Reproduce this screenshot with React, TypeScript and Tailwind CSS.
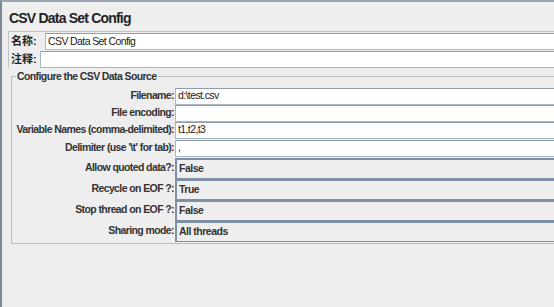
import React from "react";

const font = { fontFamily: '"Liberation Sans", Arial, "Noto Sans CJK SC", sans-serif' };

function TextRow({ label, value }: { label: string; value: string }) {
  return (
    <>
      <div className="flex h-[17px] items-center justify-end whitespace-nowrap pr-[1px] text-[10.5px] font-bold tracking-[-0.6px] text-[#333]">{label}</div>
      <div className="flex h-[17px] items-center whitespace-nowrap border border-[#a9b7c6] border-t-[#8e9cab] bg-white pl-[2px] text-[10.5px] tracking-[-0.6px] text-[#222]">
        {value}
      </div>
    </>
  );
}

function ComboRow({ label, value }: { label: string; value: string }) {
  return (
    <>
      <div className="flex h-[21px] items-center justify-end whitespace-nowrap pr-[1px] text-[10.5px] font-bold tracking-[-0.6px] text-[#333]">{label}</div>
      <div className="flex h-[21px] items-center whitespace-nowrap border border-[#7f90a4] border-l-[2px] border-t-[2px] bg-[#eeeeee] pl-[2px] text-[10.5px] font-bold tracking-[-0.5px] text-[#333]">
        {value}
      </div>
    </>
  );
}

export default function App() {
  return (
    <div
      style={font}
      className="relative h-[307px] w-[554px] overflow-hidden border-l-[2px] border-t-[2px] border-l-[#7d8997] border-t-[#9aa6b2] bg-[#eeeeee]"
    >
      <div className="w-[640px]">
        <div className="pl-[7px] pt-[7px] text-[14px] font-bold leading-[18px] tracking-[-0.8px] text-[#222]">
          CSV Data Set Config
        </div>
        <div className="ml-[6px] mt-[4px] border-l border-t border-[#c4c4c4]">
          <div className="flex h-[19px] items-center">
            <div className="w-[36px] pl-[2px] text-[11px] font-bold text-[#222]">名称:</div>
            <div className="flex h-[17px] flex-1 items-center border border-[#a9b7c6] border-t-[#8e9cab] bg-white pl-[2px] text-[10.5px] tracking-[-0.6px] text-[#222]">
              CSV Data Set Config
            </div>
          </div>
          <div className="flex h-[17px] items-center">
            <div className="w-[31px] pl-[2px] text-[11px] font-bold text-[#222]">注释:</div>
            <div className="h-[17px] flex-1 border border-[#a9b7c6] border-t-[#8e9cab] bg-white"></div>
          </div>
        </div>
        <fieldset className="ml-[9px] mt-[1px] border border-[#bdbdbd] px-[1px] pb-[1px] pt-0">
          <legend className="ml-[3px] px-[1px] text-[10.5px] font-bold tracking-[-0.6px] text-[#333]">Configure the CSV Data Source</legend>
          <div className="grid grid-cols-[162px_1fr] pt-[3px]">
            <TextRow label="Filename:" value="d:\test.csv" />
            <TextRow label="File encoding:" value="" />
            <TextRow label="Variable Names (comma-delimited):" value="t1,t2,t3" />
            <div className="col-span-2 h-[1px]"></div>
            <TextRow label="Delimiter (use '\t' for tab):" value="," />
            <div className="col-span-2 h-[1px]"></div>
            <ComboRow label="Allow quoted data?:" value="False" />
            <ComboRow label="Recycle on EOF ?:" value="True" />
            <ComboRow label="Stop thread on EOF ?:" value="False" />
            <ComboRow label="Sharing mode:" value="All threads" />
          </div>
        </fieldset>
      </div>
    </div>
  );
}
